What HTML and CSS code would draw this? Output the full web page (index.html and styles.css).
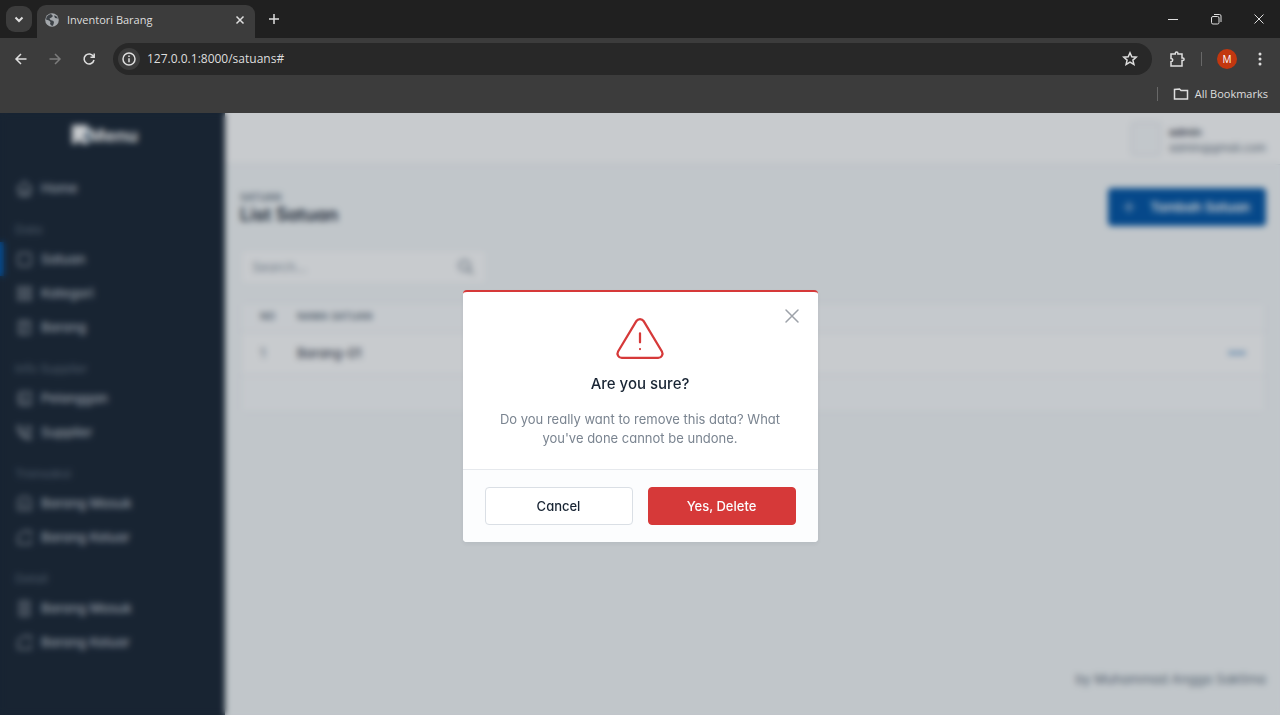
FILE: index.html
```html
<!DOCTYPE html>
<html lang="en">
<head>
<meta charset="utf-8">
<title>Inventori Barang</title>
<link rel="stylesheet" href="styles.css">
</head>
<body>
<svg class="sprite" aria-hidden="true">
  <symbol id="box" viewBox="0 0 24 24"><path d="M4 6a2 2 0 0 1 2-2h12a2 2 0 0 1 2 2v12a2 2 0 0 1-2 2H6a2 2 0 0 1-2-2z"/></symbol>
  <symbol id="return" viewBox="0 0 24 24"><path d="M4 8v12h16V8l-3-4H7z M9 14h6 M9 14l2-2"/></symbol>
  <symbol id="out" viewBox="0 0 24 24"><path d="M20 10V4h-9L4 9v11h16v-5"/></symbol>
</svg>
<header class="browser">
  <div class="tabs">
    <button class="tab-search" aria-label="Search tabs"><svg viewBox="0 0 16 16"><path d="M4.500 6.500 8 10l3.500-3.500"/></svg></button>
    <div class="tab">
      <svg class="globe" viewBox="0 0 16 16"><circle cx="8" cy="8" r="6.800"/><path d="M7 2C4 2.500 2 5 2 7.500l3 1 1.500 1.500-.5 2 2 2c2-.5 1-2 2-3l-.5-2-3-1-1-1.500 2-1 1.500-1.500zM10 3.500l1 2.500 3 .5C13.500 5 12 3.500 10 3.500z"/></svg>
      <span class="tab-title">Inventori Barang</span>
      <button class="plain" aria-label="Close tab"><svg viewBox="0 0 16 16"><path d="m4.500 4.500 7 7m0-7-7 7"/></svg></button>
    </div>
    <button class="plain new-tab" aria-label="New tab"><svg viewBox="0 0 16 16"><path d="M8 3v10M3 8h10"/></svg></button>
    <div class="window-buttons">
      <button class="plain" aria-label="Minimize"><svg viewBox="0 0 16 16"><path class="thin" d="M3 8.500h10"/></svg></button>
      <button class="plain" aria-label="Restore"><svg viewBox="0 0 16 16"><path class="thin" d="M5 5.500h4.500q1.500 0 1.500 1.500v4.500q0 1.500-1.500 1.500H5q-1.500 0-1.500-1.500V7Q3.500 5.500 5 5.500zM6 3.500h5.500q1.500 0 1.500 1.500v6"/></svg></button>
      <button class="plain" aria-label="Close window"><svg viewBox="0 0 16 16"><path class="thin" d="m3.500 3.500 9 9m0-9-9 9"/></svg></button>
    </div>
  </div>
  <div class="toolbar">
    <button class="plain" aria-label="Back"><svg viewBox="0 0 16 16"><path d="M13.500 8H3m5-5L3 8l5 5"/></svg></button>
    <button class="plain off" aria-label="Forward" disabled><svg viewBox="0 0 16 16"><path d="M2.500 8H13M8 3l5 5-5 5"/></svg></button>
    <button class="plain" aria-label="Reload"><svg viewBox="0 0 16 16"><path d="M12.500 5.500A5 5 0 1 0 13 9M13.200 2.500v3.800H9.500"/></svg></button>
    <div class="address">
      <button class="plain site-info" aria-label="Site information"><svg viewBox="0 0 16 16"><circle cx="8" cy="8" r="6"/><path d="M8 7.300v4M8 4.500v1.500"/></svg></button>
      <input class="url" aria-label="Address" value="127.0.0.1:8000/satuans#">
      <button class="plain" aria-label="Bookmark"><svg viewBox="0 0 16 16"><path d="m8 1.800 1.800 4 4.400.4-3.300 2.900 1 4.300L8 11.100l-3.900 2.300 1-4.300-3.300-2.900 4.400-.4z"/></svg></button>
    </div>
    <button class="plain extensions" aria-label="Extensions"><svg viewBox="0 0 18 18"><path d="M3 4h4.300V3.200a1.300 1.300 0 0 1 2.600 0V4H14v4h.8a1.300 1.300 0 0 1 0 2.600H14V16H3v-4.200c2.300 0 2.300-3.400 0-3.400z"/></svg></button>
    <span class="rule"></span>
    <button class="profile">M</button>
    <button class="plain" aria-label="Menu"><svg viewBox="0 0 16 16"><path class="dots" d="M8 3h.01M8 8h.01M8 13h.01"/></svg></button>
  </div>
  <div class="bookmarks">
    <span class="rule"></span>
    <svg viewBox="0 0 16 16"><path d="M1.500 3.500v9.500h13V4.500H8L6.500 3z"/></svg>
    <span>All Bookmarks</span>
  </div>
</header>

<div class="viewport">
  <div class="app">
    <aside class="sidebar">
      <h1 class="brand"><svg viewBox="0 0 16 20"><path d="M0 0h16v9l-5 2 5 4v4h-6l-3-5-3 5H0z"/></svg>Menu</h1>
      <nav>
        <a class="item" href="#"><svg viewBox="0 0 24 24"><path d="M5 12H3l9-9 9 9h-2M5 12v7a2 2 0 0 0 2 2h10a2 2 0 0 0 2-2v-7M9 21v-6h6v6"/></svg>Home</a>
        <h2>Data</h2>
        <a class="item current" href="#"><svg><use href="#box"/></svg>Satuan</a>
        <a class="item" href="#"><svg viewBox="0 0 24 24"><path d="M4 4h6v6H4zM14 4h6v6h-6zM4 14h6v6H4zM14 14h6v6h-6z"/></svg>Kategori</a>
        <a class="item" href="#"><svg viewBox="0 0 24 24"><path d="M5 4h14v16H5zM10 4v16M14 8h2M14 12h2"/></svg>Barang</a>
        <h2>Info Supplier</h2>
        <a class="item" href="#"><svg viewBox="0 0 24 24"><path d="M6 4h14v16H6zM10 16h6M11 10h4M4 8h3M4 12h3M4 16h3"/></svg>Pelanggan</a>
        <a class="item" href="#"><svg viewBox="0 0 24 24"><path d="M3 4h4l2 5-2 2a11 11 0 0 0 5 5l2-2 6 2v4C12 21 3 13 3 4M13 5h7v5h-7"/></svg>Supplier</a>
        <h2>Transaksi</h2>
        <a class="item" href="#"><svg><use href="#return"/></svg>Barang Masuk</a>
        <a class="item" href="#"><svg><use href="#out"/></svg>Barang Keluar</a>
        <h2>Detail</h2>
        <a class="item" href="#"><svg viewBox="0 0 24 24"><path d="M6 3h12v18H6zM9 8h6M9 12h6M9 16h6"/></svg>Barang Masuk</a>
        <a class="item" href="#"><svg><use href="#out"/></svg>Barang Keluar</a>
      </nav>
    </aside>
    <div class="page">
      <div class="topbar">
        <span class="avatar"></span>
        <div class="user"><span class="user-name">admin</span><span>admin@gmail.com</span></div>
      </div>
      <main>
        <div class="page-header">
          <div><div class="pretitle">Satuan</div><h2 class="title">List Satuan</h2></div>
          <button class="add"><svg viewBox="0 0 24 24"><path d="M12 5v14M5 12h14"/></svg>Tambah Satuan</button>
        </div>
        <div class="search">
          <input aria-label="Search" placeholder="Search…">
          <svg viewBox="0 0 24 24"><circle cx="10" cy="10" r="7"/><path d="m21 21-6-6"/></svg>
        </div>
        <div class="card">
          <table>
            <thead><tr><th class="no">No</th><th>Nama Satuan</th><th></th></tr></thead>
            <tbody><tr><td class="no">1</td><td class="name">Barang-01</td><td class="more"><a href="#" aria-label="Actions"><svg viewBox="0 0 20 20"><path d="M4 10h.01M10 10h.01M16 10h.01"/></svg></a></td></tr></tbody>
          </table>
          <div class="card-footer"></div>
        </div>
      </main>
      <footer>by Muhammad Angga Saktima</footer>
    </div>
  </div>
  <div class="backdrop">
    <div class="modal" role="dialog" aria-modal="true" aria-labelledby="question">
      <button class="close" aria-label="Close"><svg viewBox="0 0 16 16"><path d="m2 2 12 12m0-12L2 14"/></svg></button>
      <div class="modal-body">
        <svg class="warning" viewBox="0 0 24 24"><path d="M12 9v4M10.363 3.591 2.257 17.125a1.914 1.914 0 0 0 1.636 2.871h16.214a1.914 1.914 0 0 0 1.636-2.870L13.637 3.591a1.914 1.914 0 0 0-3.274 0zM12 16h.01"/></svg>
        <h3 id="question">Are you sure?</h3>
        <p>Do you really want to remove this data? What you've done cannot be undone.</p>
      </div>
      <div class="modal-footer">
        <button class="btn">Cancel</button>
        <button class="btn danger">Yes, Delete</button>
      </div>
    </div>
  </div>
</div>
</body>
</html>
```
FILE: styles.css
```css
* { box-sizing: border-box; }
body {
  margin: 0;
  height: 100vh;
  display: flex;
  flex-direction: column;
  overflow: hidden;
  font: 13px/19px Inter, sans-serif;
  font-feature-settings: "cv03", "cv04", "cv11";
  color: #182433;
}
h1, h2, h3, p { margin: 0; }
button, input { font: inherit; font-feature-settings: inherit; color: inherit; }
a { color: inherit; text-decoration: none; }
svg { fill: none; stroke: currentColor; stroke-width: 1.5; stroke-linejoin: round; stroke-linecap: round; flex: none; }
.sprite { display: none; }

/* Browser window */
.browser { background: #3c3c3c; color: #dedede; font: 12px/16px "Open Sans", sans-serif; }
.browser svg { width: 16px; height: 16px; display: block; stroke-linecap: butt; stroke-linejoin: miter; }
.browser .thin { stroke-width: 1; }
.browser .dots { stroke-width: 3; stroke-linecap: round; }
.plain { border: 0; padding: 0; background: none; }
.browser .off { color: #7c7c7c; }
.tabs { height: 38px; display: flex; align-items: center; padding-left: 6px; background: #202020; }
.tab-search { width: 26px; height: 26px; padding: 5px; border: 0; border-radius: 9px; background: #3c3c3c; }
.tab-search svg { stroke-width: 2; }
.tab {
  width: 218px;
  align-self: stretch;
  margin: 5px 0 0 5px;
  padding: 0 7px 4px;
  display: flex;
  align-items: center;
  gap: 7px;
  border-radius: 9px 9px 0 0;
  background: #3c3c3c;
  font-size: 11px;
}
.tab-title { flex: 1; }
.globe circle { fill: #a4a8ac; stroke: none; }
.globe path { fill: #3c4146; stroke: none; }
.new-tab { margin-left: 11px; }
.window-buttons { margin-left: auto; display: flex; gap: 27px; padding-right: 13px; }
.toolbar { height: 42px; display: flex; align-items: center; padding: 0 12px 0 13px; }
.toolbar > .plain + .plain { margin-left: 18px; }
.address { flex: 1; height: 32px; display: flex; align-items: center; margin: 0 16px; padding: 0 14px 0 5px; border-radius: 16px; background: #282828; }
.site-info { padding: 3px; border-radius: 50%; background: #3c3c3c; }
.url { flex: 1; min-width: 0; margin-left: 7px; padding: 0; border: 0; outline: 0; background: none; }
.extensions svg { width: 18px; height: 18px; }
.rule { width: 1px; height: 14px; background: #686868; }
.toolbar .rule { margin: 0 15px; }
.profile { width: 20px; height: 20px; padding: 0; border: 0; border-radius: 50%; background: #c2370f; color: #fff; font-size: 10px; line-height: 20px; }
.profile + .plain { margin-left: 15px; }
.bookmarks { height: 33px; display: flex; align-items: center; justify-content: flex-end; padding: 0 12px 6px 0; font-size: 11px; }
.bookmarks svg { margin: 0 6px 0 15px; }

/* Application */
.viewport { flex: 1; min-height: 0; position: relative; }
.app { height: 100%; display: flex; background: #f6f9fa; }
.sidebar { width: 225px; background: #182433; color: #dce1e7; }
.brand { display: flex; align-items: center; justify-content: center; height: 44px; margin: 0 15px 14px 0; font-size: 18px; color: #fff; }
.brand svg { width: 16px; height: 20px; fill: #fff; stroke: none; }
.item { height: 34px; display: flex; align-items: center; gap: 7px; padding-left: 15px; font-weight: 500; color: #b9bfc7; }
.item svg { width: 19px; height: 19px; }
.current { border-left: 4px solid #0054a6; padding-left: 11px; }
.sidebar h2 { height: 37px; padding: 15px 15px 0; font-size: 12px; font-weight: 500; color: #566271; }
.page { flex: 1; min-width: 0; display: flex; flex-direction: column; }
.topbar { height: 52px; display: flex; align-items: center; justify-content: flex-end; gap: 8px; padding: 0 14px; border-bottom: 1px solid #e2e6eb; background: #fff; }
.avatar { width: 30px; height: 34px; border: 1px solid #d8dde3; border-radius: 4px; background: #f8fafb; }
.user { display: flex; flex-direction: column; padding-top: 2px; font-size: 11px; line-height: 16px; color: #667382; }
.user-name { font-weight: 500; color: #182433; }
main { flex: 1; padding: 23px 14px 0 15px; }
.page-header { display: flex; align-items: center; justify-content: space-between; height: 38px; margin-bottom: 23px; }
.pretitle { font-size: 10px; line-height: 15px; font-weight: 600; text-transform: uppercase; color: #667382; }
.title { font-size: 18px; line-height: 20px; font-weight: 600; }
.add { height: 38px; display: flex; align-items: center; gap: 12px; padding: 0 16px 0 12px; border: 0; border-radius: 4px; background: #0054a6; color: #fff; font-weight: 600; }
.add svg { width: 18px; height: 18px; }
.search { width: 247px; height: 36px; display: flex; align-items: center; margin-bottom: 17px; padding: 0 11px; border: 1px solid #e9edf2; border-radius: 4px; background: #fff; color: #667382; }
.search input { flex: 1; min-width: 0; border: 0; padding: 0; background: none; }
.search input::placeholder { color: #8d98a5; }
.search svg { width: 18px; height: 18px; stroke-width: 2; }
.card { border: 1px solid #e6eaef; border-radius: 4px; background: #fff; }
table { width: 100%; border-collapse: collapse; text-align: left; }
th { height: 28px; padding: 0; border-bottom: 1px solid #e6eaef; background: #fcfdfe; font-size: 10px; font-weight: 600; text-transform: uppercase; color: #667382; }
td { height: 44px; padding: 0; border-bottom: 1px solid #e6eaef; }
.no { width: 56px; padding-left: 19px; }
td.no { color: #667382; }
.name { font-weight: 400; }
.more { padding-right: 18px; text-align: right; color: #3a7dbd; }
.more svg { width: 20px; height: 20px; stroke-width: 4; vertical-align: middle; }
.card-footer { height: 36px; background: #fcfdfe; }
footer { padding: 0 14px 26px; text-align: right; color: #667382; }

/* Confirmation */
.backdrop { position: absolute; inset: 0; display: flex; align-items: center; justify-content: center; padding-top: 4px; background: rgba(24, 36, 51, .24); backdrop-filter: blur(3px); }
.modal { position: relative; width: 355px; border-top: 2px solid #d63939; border-radius: 4px; background: #fff; box-shadow: 0 2px 4px rgba(24, 36, 51, .06); }
.close { position: absolute; top: 16px; right: 18px; padding: 0; border: 0; background: none; color: #9da2a9; }
.close svg { display: block; width: 16px; height: 16px; }
.modal-body { padding: 21px 30px; text-align: center; }
.warning { display: block; width: 54px; height: 54px; margin: 0 auto 6px; stroke-width: 1; color: #d63939; }
.modal h3 { margin-bottom: 15px; font-size: 15px; line-height: 22px; font-weight: 500; }
.modal p { color: #7a8490; }
.modal-footer { display: flex; gap: 15px; padding: 17px 22px; border-top: 1px solid #e6e9ed; border-radius: 0 0 4px 4px; background: #fcfdfe; }
.btn { flex: 1; height: 38px; border: 1px solid #dadfe5; border-radius: 4px; background: #fff; font-weight: 500; }
.danger { border-color: #d63939; background: #d63939; color: #fcfdfe; }
```
